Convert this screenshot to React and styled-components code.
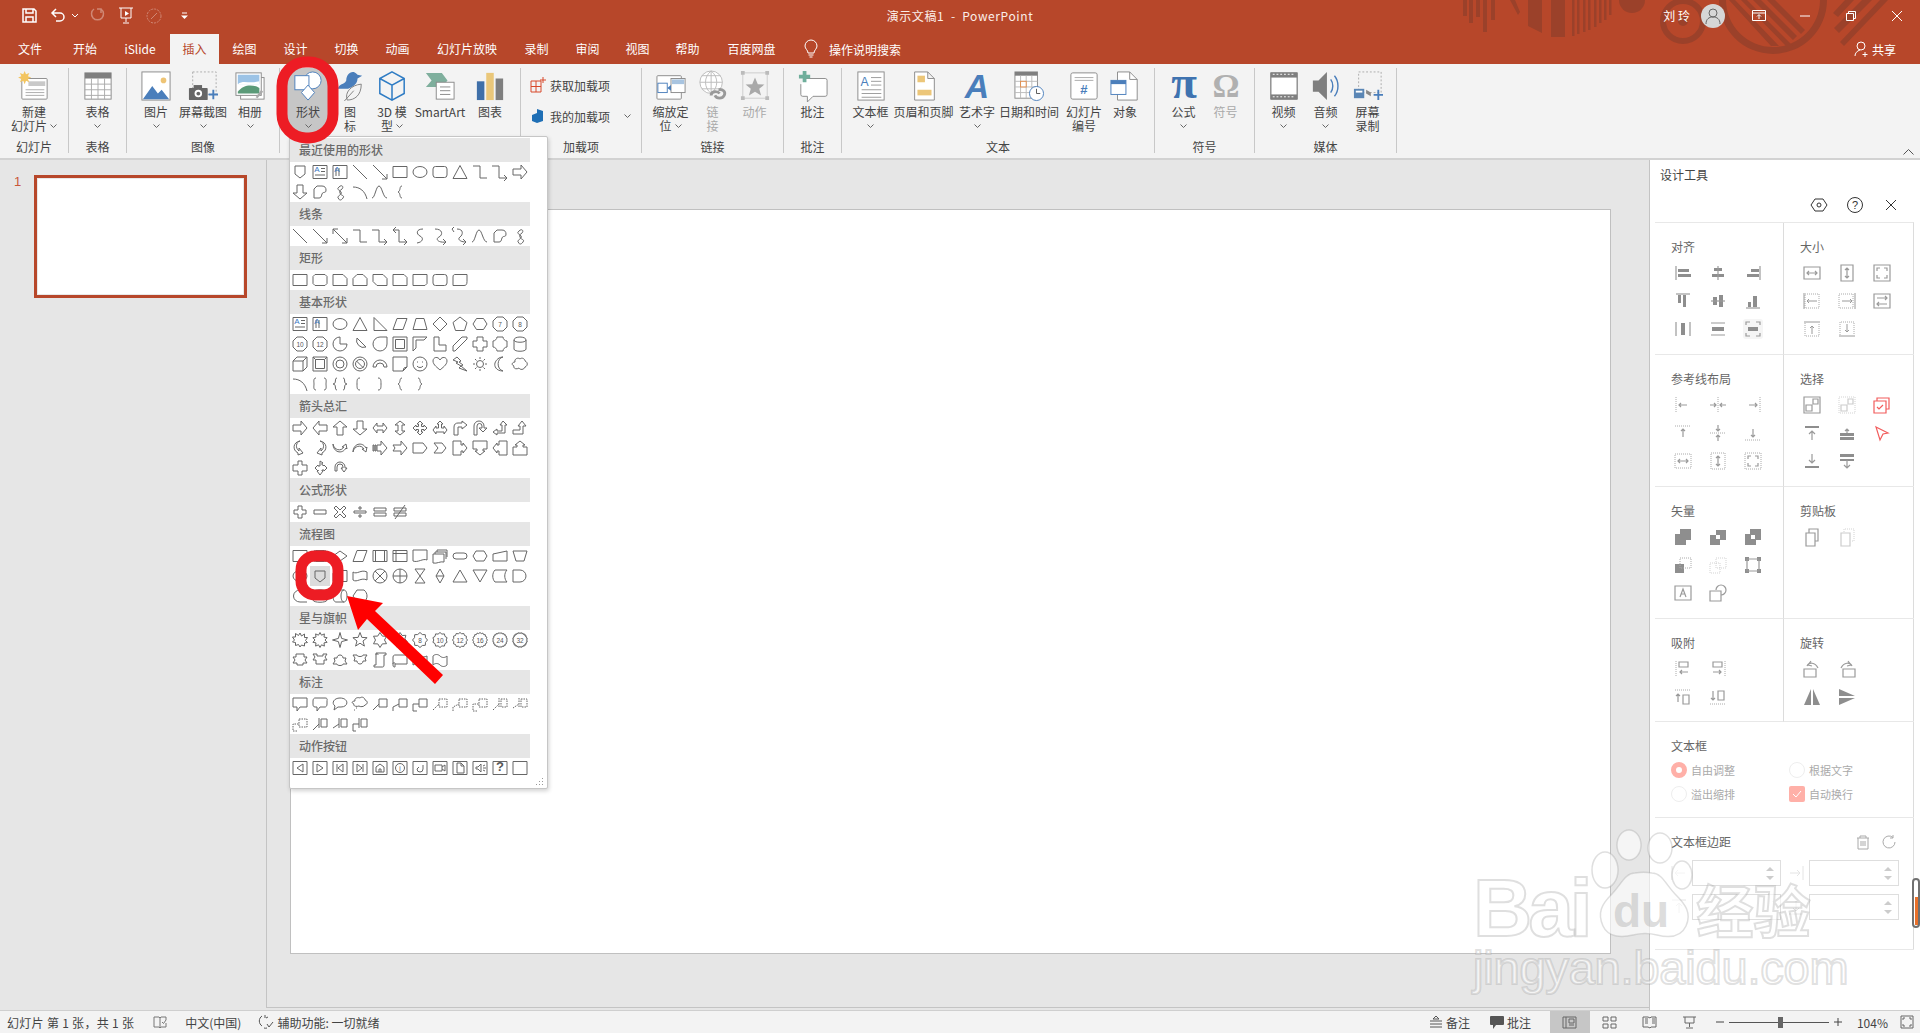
import React from 'react';
import styled, { createGlobalStyle } from 'styled-components';

const FONT = '"Noto Sans CJK SC", "Liberation Sans", sans-serif';

const GlobalStyle = createGlobalStyle`
    html, body { margin: 0; padding: 0; background: #e6e6e6; }
    body { font-family: ${FONT}; font-size: 12px; color: #444; }
    * { box-sizing: border-box; }
`;

const Page = styled.div`
    position: relative;
    width: 1920px;
    height: 1033px;
    overflow: hidden;
    display: flex;
    flex-direction: column;
`;

/* title bar */
const TitleBar = styled.div`
    position: relative;
    height: 64px;
    background: #b7472a;
    color: #fff;
    flex-shrink: 0;
`;
const Decor = styled.svg`
    position: absolute;
    left: 0;
    top: 0;
`;
const TopRow = styled.div`
    position: relative;
    height: 34px;
    padding-bottom: 3px;
    display: grid;
    grid-template-columns: 1fr auto 1fr;
    align-items: center;
`;
const Qat = styled.div`
    display: flex;
    align-items: center;
`;
const QatBtn = styled.span`
    display: flex;
    justify-content: center;
    align-items: center;
    width: ${(p) => p.$w}px;
    margin-left: ${(p) => p.$ml}px;
    opacity: ${(p) => (p.$dim ? 0.35 : 1)};
`;
const DocTitle = styled.div`
    font-size: 12px;
    letter-spacing: 0.6px;
    color: #fbeee9;
    white-space: pre;
`;
const WinControls = styled.div`
    display: flex;
    justify-content: flex-end;
    align-items: center;
`;
const UserName = styled.span`
    font-size: 12px;
    margin-right: 11px;
`;
const Avatar = styled.span`
    width: 24px;
    height: 24px;
    border-radius: 50%;
    background: #d6d6d6;
    display: flex;
    align-items: center;
    justify-content: center;
    margin-right: 11px;
`;
const WinBtn = styled.span`
    width: 46px;
    display: flex;
    justify-content: center;
`;
const TabRow = styled.div`
    position: relative;
    height: 30px;
    display: flex;
`;
const Tab = styled.div`
    width: ${(p) => p.$w}px;
    text-align: center;
    line-height: 30px;
    font-size: 12px;
    background: ${(p) => (p.$active ? '#f3f3f3' : 'transparent')};
    color: ${(p) => (p.$active ? '#b7472a' : '#fff')};
`;
const TellMe = styled.div`
    display: flex;
    align-items: center;
    margin-left: 14px;
    gap: 11px;
    font-size: 12px;
`;
const Share = styled.div`
    display: flex;
    align-items: center;
    gap: 3px;
    margin-left: auto;
    margin-right: 24px;
    font-size: 12px;
`;

/* ribbon */
const Ribbon = styled.div`
    height: 96px;
    padding-top: 4px;
    display: flex;
    align-items: flex-start;
    background: #f3f3f3;
    border-bottom: 2px solid #d2d2d2;
    flex-shrink: 0;
    position: relative;
`;
const Group = styled.div`
    width: ${(p) => p.$w}px;
    height: 85px;
    display: flex;
    flex-direction: column;
    border-right: 1px solid #c8c8c8;
`;
const GroupBody = styled.div`
    flex: 1;
    display: flex;
    justify-content: center;
    padding-right: ${(p) => p.$pr || 0}px;
`;
const GroupLabel = styled.div`
    height: 18px;
    line-height: 23px;
    text-align: center;
    font-size: 12px;
    color: #444;
`;
const RibbonBtn = styled.div`
    width: ${(p) => p.$w}px;
    height: 65px;
    padding-top: 3px;
    display: flex;
    flex-direction: column;
    align-items: center;
    background: ${(p) => (p.$on ? '#c6c6c6' : 'transparent')};
    color: ${(p) => (p.$off ? '#a9a9a9' : '#444')};
`;
const BtnLine = styled.div`
    height: 14px;
    line-height: 14px;
    font-size: 12px;
    white-space: nowrap;
    display: flex;
    align-items: center;
    gap: 3px;
    &:first-of-type { margin-top: 4px; }
`;
const AddInList = styled.div`
    width: 100%;
    padding: 9px 0 0 9px;
    display: flex;
    flex-direction: column;
    gap: 15px;
`;
const AddIn = styled.div`
    display: flex;
    align-items: center;
    gap: 4px;
    height: 16px;
    font-size: 12px;
    white-space: nowrap;
`;
const ChevGap = styled.span`
    width: 6px;
`;
const Collapse = styled.svg`
    position: absolute;
    right: 6px;
    bottom: 3px;
`;

/* work area */
const Body = styled.div`
    flex: 1;
    display: flex;
    min-height: 0;
    background: #e6e6e6;
`;
const ThumbPane = styled.div`
    width: 267px;
    margin-bottom: 2px;
    padding: 15px 0 0 14px;
    display: flex;
    gap: 14px;
    align-items: flex-start;
    border-right: 1px solid #c4c4c4;
`;
const ThumbNo = styled.span`
    width: 6px;
    margin-top: -1px;
    color: #c9563a;
    font-size: 13px;
    line-height: 16px;
    font-family: "Liberation Sans", sans-serif;
`;
const Thumb = styled.div`
    width: 213px;
    height: 123px;
    background: #fff;
    border: 3px solid #b7472a;
    box-shadow: inset 0 0 0 1px #e8e8e8;
`;
const Stage = styled.div`
    flex: 1;
    margin-bottom: 2px;
    padding: 49px 39px 0 23px;
    border-bottom: 1px solid #c4c4c4;
`;
const SlideCanvas = styled.div`
    width: 100%;
    height: 745px;
    background: #fff;
    border: 1px solid #c0c0c0;
`;

/* design panel */
const Panel = styled.div`
    width: 270px;
    background: #fff;
    padding: 0 6px 0 5px;
    position: relative;
    box-shadow: -1px 0 0 #c4c4c4;
`;
const PanelTitle = styled.div`
    padding: 7px 0 0 5px;
    height: 31px;
    font-size: 12px;
    line-height: 16px;
    color: #444;
`;
const PanelTools = styled.div`
    height: 28px;
    margin-bottom: 3px;
    display: flex;
    justify-content: flex-end;
    align-items: center;
    gap: 20px;
    padding-right: 15px;
`;
const PanelGrid = styled.div`
    display: grid;
    grid-template-columns: 129px 130px;
    border-top: 1px solid #e8e8e8;
    border-right: 1px solid #dcdcdc;
`;
const Section = styled.div`
    height: ${(p) => p.$h}px;
    grid-column: ${(p) => (p.$wide ? 'span 2' : 'auto')};
    padding: 16px 0 0 16px;
    border-bottom: 1px solid #e8e8e8;
    border-right: ${(p) => (p.$left ? '1px solid #dcdcdc' : 'none')};
`;
const SectionTitle = styled.div`
    display: flex;
    align-items: center;
    justify-content: space-between;
    padding-right: 17px;
    height: 16px;
    line-height: 16px;
    font-size: 12px;
    color: #666;
`;
const ToolGrid = styled.div`
    display: grid;
    grid-template-columns: repeat(3, 35px);
    grid-auto-rows: 28px;
    margin: 4px 0 0 -6px;
`;
const ToolCell = styled.div`
    display: flex;
    align-items: center;
    justify-content: center;
`;
const ToolBg = styled.span`
    display: flex;
    padding: 1px;
    border-radius: 3px;
    background: ${(p) => (p.$on ? '#f5f5f5' : 'transparent')};
`;
const Options = styled.div`
    display: grid;
    grid-template-columns: 118px 118px;
    grid-auto-rows: 24px;
    margin-top: 4px;
`;
const Option = styled.div`
    display: flex;
    align-items: center;
    gap: 4px;
    font-size: 11px;
    color: #aaa;
`;
const Radio = styled.span`
    width: 16px;
    height: 16px;
    border-radius: 50%;
    border: ${(p) => (p.$on ? '5px solid #ffb0a8' : '1px solid #eee')};
    background: #fff;
`;
const Check = styled.span`
    width: 16px;
    height: 16px;
    border-radius: 2px;
    background: #ffb0a8;
    display: flex;
    align-items: center;
    justify-content: center;
`;
const MarginRow = styled.div`
    display: flex;
    align-items: center;
    height: 26px;
    margin-top: ${(p) => p.$mt}px;
`;
const MarginIcon = styled.span`
    width: 21px;
    display: flex;
    opacity: 0.5;
`;
const SpinInput = styled.div`
    width: ${(p) => p.$w}px;
    height: 26px;
    border: 1px solid #dedede;
    display: flex;
    flex-direction: column;
    align-items: flex-end;
    justify-content: center;
    gap: 5px;
    padding-right: 6px;
    margin-right: 7px;
`;
const Spin = styled.i`
    width: 0;
    height: 0;
    border-left: 4px solid transparent;
    border-right: 4px solid transparent;
    border-bottom: ${(p) => (p.$down ? 'none' : '4px solid #ccc')};
    border-top: ${(p) => (p.$down ? '4px solid #ccc' : 'none')};
`;
const ScrollThumb = styled.div`
    position: absolute;
    right: 0;
    top: 718px;
    width: 8px;
    height: 50px;
    border: 2px solid #707070;
    border-radius: 4px;
    background: #fff;
    display: flex;
    align-items: flex-end;
    justify-content: center;
    padding-bottom: 1px;
    &::after {
        content: '';
        width: 3px;
        height: 28px;
        background: #e8702a;
    }
`;

/* status bar */
const StatusBar = styled.div`
    height: 23px;
    background: #f3f3f3;
    border-top: 1px solid #cfcfcf;
    display: flex;
    align-items: center;
    font-size: 12px;
    color: #444;
    flex-shrink: 0;
    padding-left: 7px;
`;
const StatusItem = styled.span`
    display: flex;
    align-items: center;
    gap: ${(p) => p.$gap ?? 3}px;
    margin-left: ${(p) => p.$ml || 0}px;
    white-space: nowrap;
    letter-spacing: ${(p) => p.$ls || 0}px;
    height: ${(p) => (p.$full ? '100%' : 'auto')};
`;
const StatusRight = styled.div`
    margin-left: auto;
    padding-right: 6px;
    display: flex;
    align-items: center;
    height: 100%;
`;
const ViewBtn = styled.span`
    width: 40px;
    height: 100%;
    display: flex;
    align-items: center;
    justify-content: center;
    background: ${(p) => (p.$on ? '#c6c6c6' : 'transparent')};
`;
const ZoomTrack = styled.div`
    position: relative;
    width: 100px;
    height: 1px;
    margin: 0 4px;
    background: #555;
`;
const ZoomKnob = styled.i`
    position: absolute;
    left: 49px;
    top: -5px;
    width: 5px;
    height: 11px;
    background: #666;
`;

/* shapes gallery */
const Gallery = styled.div`
    position: absolute;
    left: 289px;
    top: 136px;
    width: 259px;
    height: 653px;
    padding: 1px 0 0 1px;
    background: #fff;
    border: 1px solid #c6c6c6;
    border-radius: 2px;
    box-shadow: 1px 2px 4px rgba(0, 0, 0, 0.18);
`;
const GalleryHead = styled.div`
    width: 240px;
    height: 24px;
    margin-left: -1px;
    padding-left: 9px;
    line-height: 24px;
    background: #e6e6e6;
    color: #6a6a6a;
    font-size: 12px;
    font-weight: 500;
`;
const GalleryGrid = styled.div`
    width: 240px;
    margin-left: -1px;
    display: grid;
    grid-template-columns: repeat(12, 20px);
    grid-auto-rows: 20px;
`;
const ShapeCell = styled.div`
    display: flex;
    align-items: center;
    justify-content: center;
    background: ${(p) => (p.$on ? '#dcdcdc' : 'transparent')};
`;
const Grip = styled.svg`
    position: absolute;
    right: 3px;
    bottom: 3px;
`;

/* overlays */
const Overlay = styled.svg`
    position: absolute;
    left: 0;
    top: 0;
    pointer-events: none;
`;
const Watermark = styled.div`
    position: absolute;
    left: 1473px;
    top: 836px;
    pointer-events: none;
`;
const MarkRow = styled.div`
    display: flex;
    align-items: flex-end;
`;
const MarkText = styled.span`
    font-family: ${(p) => (p.$cjk ? FONT : '"Liberation Sans", sans-serif')};
    font-size: ${(p) => p.$size}px;
    font-weight: ${(p) => p.$weight || 400};
    line-height: ${(p) => p.$lh}px;
    letter-spacing: ${(p) => p.$ls || 0}px;
    margin-left: ${(p) => p.$ml || 0}px;
    color: rgba(255, 255, 255, 0.6);
    -webkit-text-stroke: 2px rgba(150, 150, 150, 0.3);
    white-space: nowrap;
    display: block;
`;

const star = (n, R = 7.5, r = 5) => {
    const pts = [];
    for (let i = 0; i < n * 2; i++) {
        const a = (Math.PI * i) / n - Math.PI / 2;
        const v = i % 2 ? r : R;
        pts.push(`${(8 + v * Math.cos(a)).toFixed(1)} ${(8 + v * Math.sin(a)).toFixed(1)}`);
    }
    return `M${pts.join('L')}z`;
};

const circle = (cx, cy, r) => `M${cx - r} ${cy}a${r} ${r} 0 1 0 ${r * 2} 0a${r} ${r} 0 1 0 ${-r * 2} 0z`;

const P = {
    line: 'M1 1l14 14',
    arrow: 'M1 1l14 14M15 10v5h-5',
    dbl: 'M1 1l14 14M15 10v5h-5M1 6V1h5',
    elbow: 'M1 2h7v12h7',
    elbowA: 'M0 2h7v12h8M12 11l3 3-3 3',
    elbowD: 'M1 2h6v12h8M12 11l3 3-3 3M4 -1L1 2l3 3',
    curve: 'M11 1C4 1 4 6 8 8s3 6-3 7',
    curveA: 'M3 1c8 0 8 6 4 8s-1 6 7 5M11 11l3 3-3 3',
    curveD: 'M5 1c7 0 6 6 3 8s0 5 6 5M2 -1L0 1l2 3M11 11l3 3-3 3',
    wave: 'M0 14C3 14 4 2 7 2s4 12 8 12',
    free: 'M2 14V5l3-3h5c3 0 4 2 4 4 0 4-3 1-4 4s-1 4-3 4z',
    scrib: 'M7 15c-4-3 4-4 2-7S4 6 7 3s5 0 3 2-3 1-2 4 5 2 3 5-4 2-4 1',
    rect: 'M1 2.5h14v11H1z',
    ell: 'M1 8a7 5.5 0 1 0 14 0a7 5.5 0 1 0 -14 0z',
    rr: 'M3.5 2.5h9a2.5 2.5 0 0 1 2.5 2.5v6a2.5 2.5 0 0 1-2.5 2.5h-9A2.5 2.5 0 0 1 1 11V5a2.5 2.5 0 0 1 2.5-2.5z',
    tri: 'M8 1.5l7 13H1z',
    rtri: 'M2 1.5l13 13H2z',
    para: 'M5 2.5h10l-4 11H1z',
    trap: 'M4 2.5h8l3 11H1z',
    dia: 'M8 1l7 7-7 7-7-7z',
    pent: 'M8 1l7 5.5-2.5 8h-9L1 6.5z',
    hex: 'M4.5 2.5h7L15 8l-3.5 5.5h-7L1 8z',
    oct: 'M5 1h6l4 4v6l-4 4H5l-4-4V5z',
    shield: 'M3 2h10v8l-5 4-5-4z',
    tb: 'M1 1.5h14v13H1zM9 4.5h4M9 7.5h4M3 11h10',
    vtb: 'M1 1.5h14v13H1zM4 4v8M7 4v8',
    right: 'M1 5h8V1l6 7-6 7v-4H1z',
    left: 'M15 5H7V1L1 8l6 7v-4h8z',
    up: 'M5 15V7H1l7-6 7 6h-4v8z',
    down: 'M5 1v8H1l7 6 7-6h-4V1z',
    lr: 'M1 8l4-5v3h6V3l4 5-4 5v-3H5v3z',
    ud: 'M8 1l5 4h-3v6h3l-5 4-5-4h3V5H3z',
    quad: 'M8 1l3 3H9.5v2.5H12V5l3 3-3 3V9.5H9.5V12H11l-3 3-3-3h1.5V9.5H4V11L1 8l3-3v1.5h2.5V4H5z',
    lru: 'M8 1l3 3H9.5v4H12V6l3 4-3 4v-2H4v2l-3-4 3-4v2h2.5V4H5z',
    bent: 'M2 15V7c0-3 2-4 4-4h4V1l5 4-5 4V7H6v8z',
    uturn: 'M2 15V6a5 5 0 0 1 10 0v2h3l-4 4-4-4h3V6a2 2 0 0 0-5 0v9z',
    leftup: 'M11 1l4 4h-2v8H5v2l-4-3 4-3v2h5V5H8z',
    bentup: 'M10 1l4 5h-3v8H1v-4h7V6H6z',
    cr: 'M8 1C4 2 3 8 7 11V8l4 5-5 2v-2C0 10 1 2 8 1z',
    cl: 'M8 1c4 1 5 7 1 10V8l-4 5 5 2v-2c6-3 5-11-2-12z',
    cu: 'M1 4c1 6 8 8 11 3h-2l4-3 1 5-1-1c-4 7-13 4-13-4z',
    cd: 'M1 12c1-6 8-8 11-3h-2l4 3 1-5-1 1C10 1 1 4 1 12z',
    striped: 'M1 5h1v6H1zM3 5h1v6H3zM5 5h4V1l6 7-6 7v-4H5z',
    notch: 'M1 5h8V1l6 7-6 7v-4H1l2-3z',
    home: 'M1 3h10l4 5-4 5H1z',
    chev: 'M2 3h8l4 5-4 5H2l4-5z',
    cbr: 'M1 1h8v4h2V3l4 5-4 5v-2H9v4H1z',
    cbd: 'M1 1h14v8h-4v2h2l-5 4-5-4h2V9H1z',
    cbl: 'M15 1H7v4H5V3L1 8l4 5v-2h2v4h8z',
    cbu: 'M1 15h14V7h-4V5h2L8 1 3 5h2v2H1z',
    clr: 'M6 1h4v4h5v6h-5v4H6v-4H1V5h5z',
    cq: 'M8 1l3 2h-1v2h1l1 1V5l3 3-3 3v-1h-2v1h1l-3 4-3-4h1V10H6v1L3 8l3-3v1h2V3z',
    circ: 'M3 11V7a5 5 0 0 1 10 0v1h2l-3 4-3-4h2V7a3 3 0 0 0-6 0v4z',
    plus: 'M6 2h4v4h4v4h-4v4H6v-4H2V6h4z',
    minus: 'M2 6h12v4H2z',
    mult: 'M4 2l4 4 4-4 2 2-4 4 4 4-2 2-4-4-4 4-2-2 4-4-4-4z',
    div: 'M2 7h12v2H2zM7 3h2v2H7zM7 11h2v2H7z',
    eq: 'M2 4h12v3H2zM2 9h12v3H2z',
    neq: 'M2 4h12v3H2zM2 9h12v3H2zM3 15L13 1',
    proc: 'M1 2.5h14v11H1z',
    dec: 'M8 3l7 5-7 5-7-5z',
    predef: 'M1 2.5h14v11H1zM3.5 2.5v11M12.5 2.5v11',
    intern: 'M1 2.5h14v11H1zM4 2.5v11M1 5.5h14',
    doc: 'M1 2h14v10c-4-2-9 3-14 1z',
    multi: 'M1 6h11v8c-4-1-7 2-11 1zM3 6V4h11v7M5 4V2h10v7',
    term: 'M4 5h8a3 3 0 0 1 0 6H4a3 3 0 0 1 0-6z',
    prep: 'M4 3h8l3 5-3 5H4L1 8z',
    manual: 'M1 6l14-3v10H1z',
    manop: 'M1 3h14l-3 10H4z',
    card: 'M4 2.5h11v11H1V5.5z',
    tape: 'M1 4c4 3 8-3 14 0v8c-6-3-10 3-14 0z',
    sum: `${circle(8, 8, 7)}M3 3l10 10M13 3L3 13`,
    or: `${circle(8, 8, 7)}M1 8h14M8 1v14`,
    coll: 'M3 1h10L3 15h10z',
    sort: 'M8 1l4 7-4 7-4-7zM4 8h8',
    ext: 'M8 2l7 12H1z',
    merge: 'M1 2h14L8 14z',
    stored: 'M3 2h12c-3 3-3 9 0 12H3c-3-3-3-9 0-12z',
    delay: 'M1 2h7a6 6 0 0 1 0 12H1z',
    seq: 'M8 2a6.5 6 0 1 0 0 12h7',
    disk: 'M1 4c0-3 14-3 14 0v8c0 3-14 3-14 0zM1 4c0 3 14 3 14 0',
    direct: 'M4 2h8c2 0 3 3 3 6s-1 6-3 6H4c-2 0-3-3-3-6s1-6 3-6zM12 2c-2 0-3 3-3 6s1 6 3 6',
    disp: 'M5 2h7c4 3 4 9 0 12H5L1 8z',
    ribU: 'M1 5h3V2h8v3h3l-2 3 2 3h-4v2H5v-2H1l2-3z',
    ribD: 'M1 2h4v2h6V2h4l-2 3 2 3h-3v4H4V8H1l2-3z',
    cribU: 'M1 12l2-3-1-3h3c0-4 6-4 6 0h3l-1 3 2 3h-4c0 2-6 2-6 0z',
    cribD: 'M1 3h4c0 2 6 2 6 0h4l-2 3 1 3h-3c0 4-6 4-6 0H2l1-3z',
    vscroll: 'M4 1h10v2h-2v10c0 2-1 2-2 2H2v-2h2zM4 3c0-2 2-2 2 0',
    hscroll: 'M1 5c0-2 2-2 2-2h12v9H3v3c-1 0-2 0-2-2zM3 12c0-2-2-2-2 0',
    waveF: 'M1 4c4-3 9 3 14 0v9c-5 3-10-3-14 0z',
    wave2: 'M1 4c2-2 5-2 7 0s5 2 7 0v9c-2 2-5 2-7 0s-5-2-7 0z',
    callR: 'M1 2h14v9H8l-3 4v-4H1z',
    callRR: 'M3 2h10c3 0 2 2 2 3v3c0 2-1 3-2 3H8l-3 4v-4H3c-2 0-2-2-2-3V5c0-2 1-3 2-3z',
    callO: 'M8 2c9 0 9 9 1 9-1 0-2 0-3 0l-4 3 1-4C-1 7 2 2 8 2z',
    cloud: 'M3 6c-1-3 3-5 5-3 2-2 5 0 5 2 3 1 3 5 0 6-1 3-5 3-6 1-3 2-6 0-5-2-3-1-2-4 1-4z',
    cloudC: 'M3 5c-1-3 3-4 5-3 2-2 5 0 5 2 3 1 3 4 0 5-1 2-5 2-6 1-3 1-6 0-5-2-3-1-2-3 1-3zM2 14h1M4 12h1',
    l1: 'M7 3h8v8H7zM1 14l6-6',
    l2: 'M7 3h8v8H7zM1 15v-4l6-3',
    l3: 'M7 3h8v8H7zM5 15H1V8h6',
    a1: 'M9 3h6v8H9zM7 2v10M1 14l6-6',
    a2: 'M9 3h6v8H9zM7 2v10M1 12l6-4',
    a3: 'M9 3h6v8H9zM7 2v10M4 15H1V8h6',
    btn: 'M1 1.5h14v13H1z',
};

const T = (d, t) => ({ d, t });
const D = (d) => ({ d, dash: true });
const HI = 'HI';

const SECTIONS = [
    ['最近使用的形状', [P.shield, T(P.tb, 'A'), T(P.vtb, 'A'), P.line, P.arrow, P.rect, P.ell, P.rr, P.tri, P.elbow, P.elbowA, P.right, P.down, P.free, P.scrib, 'M1 3c7 0 12 4 14 12', P.wave, 'M10 2C7 2 9 7 6 8c3 1 1 6 4 6']],
    ['线条', [P.line, P.arrow, P.dbl, P.elbow, P.elbowA, P.elbowD, P.curve, P.curveA, P.curveD, P.wave, P.free, P.scrib]],
    ['矩形', [P.rect, 'M3 2.5h10l2 2v7l-2 2H3l-2-2v-7z', 'M1 2.5h10l4 4v7H1z', 'M5 2.5h6l4 4v7H1v-7z', 'M1 2.5h10l4 4v7H5l-4-4z', 'M1 2.5h11l3 3v8H1z', 'M1 2.5h14v9l-2 2H1z', P.rr, 'M3 2.5h12v7c0 3-1 4-3 4H1V5c0-2 1-2.5 2-2.5z']],
    ['基本形状', [T(P.tb, 'A'), T(P.vtb, 'A'), P.ell, P.tri, P.rtri, P.para, P.trap, P.dia, P.pent, P.hex, T(P.oct, '7'), T(P.oct, '8'),
        T(P.oct, '10'), T(P.oct, '12'), 'M8 1a7 7 0 1 0 7 7H8z', 'M5 2L14 11A7 7 0 0 1 5 2z', 'M15 1v7a7 7 0 1 1-7-7z', 'M1 1h14v14H1zM3.5 3.5h9v9h-9z', 'M1 1h14l-3 3H4v8l-3 3z', 'M2 1h5v8h7v6H2z', 'M1 15V10L10 1h5v2L3 15z', 'M5 1h6v4h4v6h-4v4H5v-4H1V5h4z', 'M5 1h6c0 2 2 4 4 4v6c-2 0-4 2-4 4H5c0-2-2-4-4-4V5c2 0 4-2 4-4z', 'M2 4c0-4 12-4 12 0v9c0 3-12 3-12 0zM2 4c0 3 12 3 12 0',
        'M1 5l4-4h10v10l-4 4H1zM1 5h10v10M11 5l4-4', 'M1 1h14v14H1zM3.5 3.5h9v9h-9zM1 1l2.5 2.5M15 1l-2.5 2.5', `${circle(8, 8, 7)}${circle(8, 8, 4)}`, `${circle(8, 8, 7)}${circle(8, 8, 4.5)}M4.5 5l7 7`, 'M1 11a7 7 0 0 1 14 0h-3a4 4 0 0 0-8 0z', 'M1 1h14v10l-4 4H1zM11 15l1-3 3-1', `${circle(8, 8, 7)}M5 6h1M10 6h1M5 10c1 2 5 2 6 0`, 'M8 4c2-4 7-3 7 1 0 4-5 7-7 9-2-2-7-5-7-9 0-4 5-5 7-1z', 'M5 1l4 4-2 1 4 3-2 1 6 5-8-3 2-2-5-3 2-1L1 4z', `${circle(8, 8, 3.5)}M8 1v2M8 13v2M1 8h2M13 8h2M3 3l1.5 1.5M13 13l-1.5-1.5M13 3l-1.5 1.5M3 13l1.5-1.5`, 'M11 1C5 2 4 13 11 15 4 15 2 10 3 7s4-6 8-6z', P.cloud,
        'M1 3c7 0 12 4 14 12', 'M4 2C1 2 2 6 2 8s-1 6 2 6M12 2c3 0 2 4 2 6s1 6-2 6', 'M5 2C2 2 5 8 1 8c4 0 1 6 4 6M11 2c3 0 0 6 4 6-4 0-1 6-4 6', 'M8 2C5 2 5 4 5 8s0 6 3 6', 'M6 2c3 0 3 2 3 6s0 6-3 6', 'M10 2C7 2 9 7 6 8c3 1 1 6 4 6', 'M6 2c3 0 1 5 4 6-3 1-1 6-4 6']],
    ['箭头总汇', [P.right, P.left, P.up, P.down, P.lr, P.ud, P.quad, P.lru, P.bent, P.uturn, P.leftup, P.bentup,
        P.cr, P.cl, P.cu, P.cd, P.striped, P.notch, P.home, P.chev, P.cbr, P.cbd, P.cbl, P.cbu, P.clr, P.cq, P.circ]],
    ['公式形状', [P.plus, P.minus, P.mult, P.div, P.eq, P.neq]],
    ['流程图', [P.proc, P.rr, P.dec, P.para, P.predef, P.intern, P.doc, P.multi, P.term, P.prep, P.manual, P.manop,
        P.ell, HI, P.card, P.tape, P.sum, P.or, P.coll, P.sort, P.ext, P.merge, P.stored, P.delay, P.seq, P.disk, P.direct, P.disp]],
    ['星与旗帜', ['M8 1l1.5 3 3-2 0 3.5 3 0-2 3 2 2-3 .5 0 3-3-1L8 15l-1.5-2.5-3 1 0-3-3-.5 2-2-2-3 3 0 0-3.5 3 2z', star(10, 7.5, 5), star(4, 7.5, 2.2), star(5, 7.5, 3.2), star(6, 7.5, 4.5), star(7, 7.5, 5), T(star(8, 7.5, 6), '8'), T(star(10, 7.5, 6.2), '10'), T(star(12, 7.5, 6.4), '12'), T(star(16, 7.5, 6.5), '16'), T(star(24, 7.5, 6.5), '24'), T(star(32, 7.5, 6.5), '32'),
        P.ribU, P.ribD, P.cribU, P.cribD, P.vscroll, P.hscroll, P.waveF, P.wave2]],
    ['标注', [P.callR, P.callRR, P.callO, P.cloudC, P.l1, P.l2, P.l3, D(P.l1), D(P.l2), D(P.l3), D(P.a1), D(P.a2),
        D(P.l3), P.a1, P.a2, P.a3]],
    ['动作按钮', [`${P.btn}M11 4v8L5 8z`, `${P.btn}M5 4v8l6-4z`, `${P.btn}M11 4v8L6 8zM5 4v8`, `${P.btn}M5 4v8l5-4zM11 4v8`, `${P.btn}M4 12V7l4-3 4 3v5zM7 12V9h2v3`, T(`${P.btn}${circle(8, 8, 4.5)}`, 'i'), `${P.btn}M11 5v4a3 3 0 0 1-6 0l2-2`, `${P.btn}M3 5h7v6H3zM10 7l3-2v6l-3-2`, `${P.btn}M5 3h4l3 3v7H5zM9 3v3h3`, `${P.btn}M4 7v2h2l3 3V4L6 7zM11 6l2-1M11 8h3M11 10l2 1`, T(P.btn, '?'), P.btn]],
];

const IconSvg = styled.svg`
    display: block;
    flex-shrink: 0;
    overflow: visible;
`;

const ShapeIcon = ({ d, t, dash }) => (
    <IconSvg width="16" height="16" viewBox="0 0 16 16">
        <path d={d} fill="none" stroke="#666" strokeWidth="1" strokeDasharray={dash ? '1.5 1' : undefined} />
        {t && (
            <text x={t === 'A' ? 5 : 8} y={t === 'A' ? 8 : 11} textAnchor="middle" fontSize={t === 'A' ? 8 : t === '?' ? 13 : 6.5} fontWeight={t === '?' ? 700 : 400} fontFamily="Liberation Sans" fill={t === 'A' ? '#3b78c2' : '#555'}>{t}</text>
        )}
    </IconSvg>
);

const ShapeGallery = () => (
    <Gallery>
        {SECTIONS.map(([title, items]) => (
            <React.Fragment key={title}>
                <GalleryHead>{title}</GalleryHead>
                <GalleryGrid>
                    {items.map((item, i) => {
                        if (item === HI) return <ShapeCell key={i} $on><ShapeIcon d="M3 3h10v7l-5 4-5-4z" /></ShapeCell>;
                        const p = typeof item === 'string' ? { d: item } : item;
                        return <ShapeCell key={i}><ShapeIcon {...p} /></ShapeCell>;
                    })}
                </GalleryGrid>
            </React.Fragment>
        ))}
        <Grip width="8" height="8" viewBox="0 0 8 8">
            <path d="M6 1h1v1H6zM3 4h1v1H3zM6 4h1v1H6zM0 7h1v1H0zM3 7h1v1H3zM6 7h1v1H6z" fill="#999" />
        </Grip>
    </Gallery>
);

/* ribbon pictures, all 32 x 32 */
const BLUE = '#4a7ebb';
const GREY = '#7f7f7f';
const LINE = '#8a8a8a';
const R = ({ children }) => <IconSvg width="30" height="30" viewBox="0 0 32 32">{children}</IconSvg>;

const ICONS = {
    newSlide: <R><rect x="3" y="8" width="27" height="22" rx="1" fill="#fff" stroke={LINE} /><rect x="10" y="11" width="18" height="5" fill="#c9c9c9" /><path d="M7 20h20M7 23h20M7 26h20" stroke="#aaa" /><path d="M6 0l1.5 3.5L11 2 9.5 5.5 13 7 9.5 8.5 11 12 7.500 10.500 6 14 4.500 10.500 1 12 2.500 8.500-1 7l3.500-1.500L1 2l3.500 1.500z" fill="#f3c560" /></R>,
    table: <R><rect x="2" y="2" width="28" height="28" fill="#fff" stroke={LINE} /><rect x="2" y="2" width="28" height="6" fill={GREY} /><path d="M2 14h28M2 20h28M2 26h28M9 8v22M16 8v22M23 8v22" stroke="#aaa" fill="none" /></R>,
    picture: <R><rect x="1" y="1" width="30" height="30" fill="#fff" stroke={LINE} /><path d="M2 30l10-14 6 8 4-4 8 10z" fill={BLUE} /><circle cx="24" cy="10" r="3" fill="#eec475" /></R>,
    shot: <R><rect x="5" y="1" width="25" height="24" fill="none" stroke="#aaa" strokeDasharray="2 2" /><rect x="1" y="18" width="20" height="13" rx="1" fill="#666" /><rect x="6" y="15" width="9" height="4" fill="#666" /><circle cx="11" cy="24" r="4" fill="#fff" /><circle cx="11" cy="24" r="2" fill="#666" /><path d="M27 20v10M22 25h10" stroke={BLUE} strokeWidth="2" /></R>,
    album: <R><rect x="6" y="7" width="25" height="23" fill="#fff" stroke={LINE} /><rect x="1" y="2" width="27" height="24" fill="#fff" stroke={LINE} /><rect x="3" y="4" width="23" height="10" fill="#9cc3e6" /><path d="M3 14c6-5 12 0 23-3v3z" fill="#fff" /><path d="M3 22c6-8 16-8 23-4v6H3z" fill="#5b9a78" /><path d="M22 28l6-8 2 2-6 7z" fill="#aaa" /></R>,
    shapes: <R><circle cx="21" cy="10" r="9" fill="#fff" stroke={BLUE} /><rect x="2" y="5" width="15" height="15" fill="#fff" stroke={BLUE} /><path d="M16 15l7 8-7 8-7-8z" fill="#fff" stroke={BLUE} /></R>,
    icon: <R><path d="M3 19c1-6 7-4 9-9 0-5 3-9 7-9 3 0 5 3 5 3l5 1-5 3c0 6-5 9-10 11z" fill={BLUE} /><path d="M13 31c-3-8 4-16 15-17 0 12-7 17-15 17zM10 32l10-11" fill="#f3f3f3" stroke={GREY} /></R>,
    cube: <R><path d="M16 1l13 7v16l-13 7-13-7V8zM3 8l13 7 13-7M16 15v16" fill="none" stroke="#2f7cc4" strokeWidth="1.6" /></R>,
    smart: <R><path d="M1 2h17l6 8-6 7H1l6-7z" fill="#7faf9d" /><rect x="12" y="12" width="19" height="18" fill="#fff" stroke={LINE} /><path d="M16 17h11M16 21h11M16 25h11" stroke="#888" /></R>,
    chart: <R><rect x="2" y="11" width="8" height="20" fill="#3f6fa8" /><rect x="12" y="2" width="8" height="29" fill="#eac77a" /><rect x="22" y="8" width="8" height="23" fill={GREY} /></R>,
    zoom: <R><rect x="1" y="5" width="26" height="25" rx="1" fill="#fff" stroke={LINE} /><rect x="2" y="13" width="10" height="10" fill="#fff" stroke={BLUE} /><rect x="16" y="8" width="15" height="15" fill="#fff" stroke={LINE} /><rect x="17" y="9" width="13" height="5" fill="#a8c4e0" /><path d="M12 18l4-3v6z" fill={BLUE} /></R>,
    link: <R><circle cx="14" cy="12" r="12" fill="#fff" stroke="#bbb" /><path d="M14 0v24M2 12h24M4 5h20M4 19h20M14 0c-8 6-8 18 0 24M14 0c8 6 8 18 0 24" stroke="#bbb" fill="none" /><path d="M14 26c0-5 7-5 9-2M18 26c2 4 8 4 10 0s-2-7-6-6" stroke="#999" strokeWidth="3" fill="none" /></R>,
    action: <R><rect x="3" y="2" width="26" height="27" fill="none" stroke="#ccc" /><path d="M1 0h4v4H1zM27 0h4v4h-4zM1 27h4v4H1zM27 27h4v4h-4z" fill="#bbb" /><path d="M16 7l3 7 7 .5-5.500 4.500 2 7-6.500-4-6.500 4 2-7L6 14.500l7-.5z" fill="#a9a9a9" /></R>,
    comment: <R><path d="M7 8h22a2 2 0 0 1 2 2v15a2 2 0 0 1-2 2H16l-6 6v-6H5a2 2 0 0 1-2-2V14" fill="#fff" stroke={LINE} /><path d="M7 0v12M1 6h12" stroke="#6fae9b" strokeWidth="4" /></R>,
    textbox: <R><rect x="2" y="1" width="28" height="30" fill="#fff" stroke={LINE} /><text x="9" y="16" textAnchor="middle" fontSize="13" fontFamily="Liberation Sans" fill={BLUE}>A</text><path d="M16 7h11M16 11h11M16 15h11M6 20h21M6 24h21M6 28h21" stroke="#999" /></R>,
    header: <R><path d="M6 1h14l7 7v23H6zM20 1v7h7" fill="#fff" stroke={LINE} /><rect x="9" y="5" width="8" height="7" fill="#ecc679" /><rect x="9" y="20" width="15" height="6" fill="#ecc679" /></R>,
    art: <R><text x="16" y="29" textAnchor="middle" fontSize="36" fontStyle="italic" fontWeight="700" fontFamily="Liberation Sans" fill={BLUE}>A</text></R>,
    date: <R><rect x="1" y="1" width="24" height="28" fill="#fff" stroke={LINE} /><rect x="1" y="1" width="24" height="4" fill={GREY} /><path d="M1 11h24M1 17h24M1 23h24M7 5v24M13 5v24M19 5v24" stroke="#bbb" /><rect x="7" y="11" width="6" height="6" fill="#fff" stroke="#e08b4a" /><circle cx="24" cy="24" r="7.500" fill="#fff" stroke={BLUE} /><path d="M24 19v5h4" stroke="#555" fill="none" /></R>,
    slideNo: <R><rect x="2" y="2" width="28" height="28" rx="2" fill="#fff" stroke={LINE} /><path d="M6 7h20M6 10h20" stroke="#aaa" /><text x="16" y="25" textAnchor="middle" fontSize="14" fontWeight="700" fontFamily="Liberation Sans" fill={BLUE}>#</text></R>,
    object: <R><path d="M8 1h13l8 8v22H8z" fill="#fff" stroke={LINE} /><path d="M21 1v8h8" fill="none" stroke={LINE} /><rect x="1" y="10" width="16" height="15" fill="#fff" stroke={BLUE} /><rect x="1" y="10" width="16" height="4" fill={BLUE} /></R>,
    pi: <R><text x="16" y="29" textAnchor="middle" fontSize="50" fontWeight="700" fontFamily="Liberation Serif" fill="#3f73b0">π</text></R>,
    omega: <R><text x="16" y="28" textAnchor="middle" fontSize="36" fontFamily="Liberation Serif" fontWeight="700" fill="#b0b0b0">Ω</text></R>,
    video: <R><rect x="2" y="2" width="28" height="28" fill="#fff" stroke="#555" /><rect x="2" y="2" width="28" height="5" fill={GREY} /><rect x="2" y="25" width="28" height="5" fill={GREY} /><path d="M4 3.500h24M4 27.500h24" stroke="#fff" strokeDasharray="2 2" /></R>,
    audio: <R><path d="M2 10h6l9-9v30l-9-9H2z" fill={GREY} /><path d="M21 9c3 4 3 10 0 14M25 5c5 6 5 16 0 22" fill="none" stroke={BLUE} strokeWidth="1.500" /></R>,
    record: <R><rect x="6" y="1" width="24" height="22" fill="none" stroke="#aaa" strokeDasharray="2 2" /><rect x="1" y="19" width="11" height="10" fill="#5a86b5" /><rect x="3" y="21" width="7" height="2" fill="#fff" /><path d="M14 20l5 3v4l-5-3z" fill="#888" /><path d="M27 20v11M22 25.500h10" stroke={BLUE} strokeWidth="2" /></R>,
};

const Chevron = () => (
    <IconSvg width="7" height="4" viewBox="0 0 7 4"><path d="M.5.5l3 3 3-3" fill="none" stroke="#666" /></IconSvg>
);

const Btn = ({ w, icon, lines, on, off }) => (
    <RibbonBtn $w={w} $on={on} $off={off}>
        {ICONS[icon]}
        {lines.map((l, i) => (
            <BtnLine key={i}>
                {l === 'v' ? <Chevron /> : l.endsWith(' v') ? <>{l.slice(0, -2)}<Chevron /></> : l}
            </BtnLine>
        ))}
    </RibbonBtn>
);

const RibbonGroup = ({ w, label, pr, children }) => (
    <Group $w={w}>
        <GroupBody $pr={pr}>{children}</GroupBody>
        <GroupLabel>{label}</GroupLabel>
    </Group>
);

const RibbonBar = () => (
    <Ribbon>
        <RibbonGroup w={69} label="幻灯片"><Btn w={62} icon="newSlide" lines={['新建', '幻灯片 v']} /></RibbonGroup>
        <RibbonGroup w={58} label="表格"><Btn w={57} icon="table" lines={['表格', 'v']} /></RibbonGroup>
        <RibbonGroup w={153} label="图像">
            <Btn w={47} icon="picture" lines={['图片', 'v']} />
            <Btn w={47} icon="shot" lines={['屏幕截图', 'v']} />
            <Btn w={47} icon="album" lines={['相册', 'v']} />
        </RibbonGroup>
        <RibbonGroup w={241} label="">
            <Btn w={42} icon="shapes" lines={['形状', 'v']} on />
            <Btn w={42} icon="icon" lines={['图', '标']} />
            <Btn w={42} icon="cube" lines={['3D 模', '型 v']} />
            <Btn w={54} icon="smart" lines={['SmartArt']} />
            <Btn w={46} icon="chart" lines={['图表']} />
        </RibbonGroup>
        <Group $w={121}>
            <GroupBody>
                <AddInList>
                    <AddIn>
                        <IconSvg width="16" height="16" viewBox="0 0 16 16"><path d="M1 4h10v11H1zM1 9.500h10M6 4v11M13 0v6M10 3h6" fill="none" stroke="#d8482a" /></IconSvg>
                        获取加载项
                    </AddIn>
                    <AddIn>
                        <IconSvg width="16" height="16" viewBox="0 0 16 16"><path d="M7 1l6 2v10l-6 2-5-2V7l5-2z" fill="#1f6fb5" /></IconSvg>
                        我的加载项<ChevGap /><Chevron />
                    </AddIn>
                </AddInList>
            </GroupBody>
            <GroupLabel>加载项</GroupLabel>
        </Group>
        <RibbonGroup w={142} label="链接">
            <Btn w={42} icon="zoom" lines={['缩放定', '位 v']} />
            <Btn w={42} icon="link" lines={['链', '接']} off />
            <Btn w={42} icon="action" lines={['动作']} off />
        </RibbonGroup>
        <RibbonGroup w={58} label="批注"><Btn w={50} icon="comment" lines={['批注']} /></RibbonGroup>
        <RibbonGroup w={313} label="文本" pr={8}>
            <Btn w={45} icon="textbox" lines={['文本框', 'v']} />
            <Btn w={61} icon="header" lines={['页眉和页脚']} />
            <Btn w={46} icon="art" lines={['艺术字', 'v']} />
            <Btn w={58} icon="date" lines={['日期和时间']} />
            <Btn w={52} icon="slideNo" lines={['幻灯片', '编号']} />
            <Btn w={30} icon="object" lines={['对象']} />
        </RibbonGroup>
        <RibbonGroup w={100} label="符号">
            <Btn w={42} icon="pi" lines={['公式', 'v']} />
            <Btn w={42} icon="omega" lines={['符号']} off />
        </RibbonGroup>
        <RibbonGroup w={142} label="媒体">
            <Btn w={42} icon="video" lines={['视频', 'v']} />
            <Btn w={42} icon="audio" lines={['音频', 'v']} />
            <Btn w={42} icon="record" lines={['屏幕', '录制']} />
        </RibbonGroup>
        <Collapse width="11" height="6" viewBox="0 0 11 6"><path d="M.5 5.500l5-5 5 5" fill="none" stroke="#555" /></Collapse>
    </Ribbon>
);

/* design panel pictures */
const g = '#9a9a9a';
const TOOLS = {
    align: [
        { s: 'M2 2v14', f: 'M4 5h11v3H4zM4 10h13v3H4z' }, { s: 'M9 2v14', f: 'M5 4h8v3H5zM3 10h12v3H3z' }, { s: 'M16 2v14', f: 'M7 5h8v3H7zM3 10h12v3H3z' },
        { s: 'M2 2h14', f: 'M4 3h3v8H4zM9 3h3v12H9z' }, { s: 'M2 9h14', f: 'M4 5h4v8H4zM10 3h4v12h-4z' }, { s: 'M2 16h14', f: 'M4 10h3v5H4zM9 4h4v11H9z' },
        { s: 'M2 2v14M16 2v14', f: 'M7 3h4v12H7z' }, { s: 'M2 3h14M2 15h14', f: 'M3 7h12v4H3z' }, { s: 'M2 5V2h4M12 2h4v3M2 13v3h4M12 16h4v-3', f: 'M4 7h10v4H4z', on: true },
    ],
    size: [
        { s: 'M1 3h16v12H1zM4 9h10M6 7L4 9l2 2M12 7l2 2-2 2' }, { s: 'M3 1h12v16H3zM9 4v10M7 6l2-2 2 2M7 12l2 2 2-2' }, { s: 'M1 1h16v16H1zM4 7V4h3M11 4h3v3M4 11v3h3M11 14h3v-3' },
        { s: 'M1 1v16M4 9h10M6 7L4 9l2 2', d: 'M2 2h14v14H2z', w: 2 }, { s: 'M17 1v16M4 9h10M12 7l2 2-2 2', d: 'M1 2h14v14H1z', w: 2 }, { s: 'M1 2h16v14H1zM4 6h10M4 12h10M12 4l2 2-2 2M6 10l-2 2 2 2' },
        { s: 'M1 2h16M9 14V6M7 8l2-2 2 2', d: 'M2 3v13h14V3', w: 2 }, { s: 'M1 16h16M9 4v8M7 10l2 2 2-2', d: 'M2 15V2h14v13', w: 2 },
    ],
    guide: [
        { d: 'M2 1v16', s: 'M13 9H5M7 7L5 9l2 2' }, { d: 'M9 1v16', s: 'M1 9h6M5 7l2 2-2 2M17 9h-6M13 7l-2 2 2 2' }, { d: 'M16 1v16', s: 'M5 9h8M11 7l2 2-2 2' },
        { d: 'M1 2h16', s: 'M9 13V5M7 7l2-2 2 2' }, { d: 'M1 9h16', s: 'M9 1v6M7 5l2 2 2-2M9 17v-6M7 13l2-2 2 2' }, { d: 'M1 16h16', s: 'M9 5v8M7 11l2 2 2-2' },
        { d: 'M1 2h16v14H1z', s: 'M4 9h10M6 7L4 9l2 2M12 7l2 2-2 2' }, { d: 'M2 1h14v16H2z', s: 'M9 4v10M7 6l2-2 2 2M7 12l2 2 2-2' }, { d: 'M1 1h16v16H1z', s: 'M4 7V4h3M11 4h3v3M4 11v3h3M11 14h3v-3' },
    ],
    select: [
        { s: 'M1 1h16v16H1zM3 9h6v6H3zM10 3h5v5h-5z' }, { d: 'M1 1h16v16H1z', s: 'M3 9h6v6H3zM10 3h5v5h-5z', dim: true }, { s: 'M1 5h12v12H1zM4 5V2h12v11h-3M4 11l2 2 4-4', c: '#f25c5c' },
        { s: 'M9 16V7M6 10l3-3 3 3', f: 'M2 2h14v2H2z' }, { s: 'M9 5v4M7 7l2-2 2 2', f: 'M2 9h14v3H2zM2 13h14v3H2z' }, { s: 'M3 3l12 6-5 1-3 6z', c: '#f25c5c' },
        { s: 'M9 2v9M6 8l3 3 3-3', f: 'M2 14h14v2H2z' }, { s: 'M9 8v8M6 13l3 3 3-3', f: 'M2 2h14v3H2zM2 7h14v2H2z' },
    ],
    vector: [
        { f: 'M1 6h11v11H1zM6 1h11v11H6z' }, { f: 'M1 7h10v10H1zM7 2h10v10H7z', b: 'M7 7h4v4H7z' }, { f: 'M1 6h11v11H1zM6 1h11v11H6z', b: 'M7 7h4v4H7z' },
        { f: 'M1 8h9v9H1z', d: 'M6 2h11v10H6z' }, { d: 'M1 7h10v10H1zM7 2h10v10H7z', dim: true }, { s: 'M3 3h12v12H3z', f: 'M1 1h4v4H1zM13 1h4v4h-4zM1 13h4v4H1zM13 13h4v4h-4z' },
        { s: 'M1 2h16v14H1zM6 13l3-8 3 8M7 10h4' }, { s: 'M1 7h11v10H1z', o: 'M7 6a5 5 0 1 1 5 5' },
    ],
    clip: [{ s: 'M3 5h9v13H3zM6 5V1h9v12h-3' }, { s: 'M3 5h9v13H3z', d: 'M6 4V1h10v12h-3', dim: true }],
    snap: [
        { d: 'M2 1v16', s: 'M5 2h9v5H5zM14 12H6M8 10l-2 2 2 2' }, { d: 'M16 1v16', s: 'M4 2h9v5H4zM4 12h8M10 10l2 2-2 2' }, {},
        { d: 'M1 2h16', s: 'M4 14V6M2 8l2-2 2 2M9 7h6v9H9z' }, { d: 'M1 16h16', s: 'M4 3v9M2 10l2 2 2-2M9 3h6v9H9z' },
    ],
    rotate: [
        { s: 'M1 9h12v8H1zM4 6c2-4 8-4 11 2M8 1L5 5l4 1' }, { s: 'M5 9h12v8H5zM14 6C12 2 6 2 3 8M10 1l3 4-4 1' }, {},
        { f: 'M8 1v16H1zM10 1v16h7z' }, { f: 'M1 1l16 7H1zM1 10h16L1 17z' },
    ],
};

const Tool = ({ s, f, d, b, o, w = 1, c = g, dim, on }) => (
    <ToolCell>
        <ToolBg $on={on}>
            <IconSvg width="18" height="18" viewBox="0 0 18 18" style={dim ? { opacity: 0.5 } : undefined}>
                {f && <path d={f} fill={c === g ? '#8e8e8e' : c} />}
                {b && <path d={b} fill="#fff" />}
                {d && <path d={d} fill="none" stroke="#aaa" strokeDasharray="1 1" />}
                {s && <path d={s} fill="none" stroke={c} strokeWidth={w === 2 ? 1 : 1.2} />}
                {o && <path d={o} fill="none" stroke={c} strokeWidth="1.2" />}
            </IconSvg>
        </ToolBg>
    </ToolCell>
);

const ToolSection = ({ h, title, tools, left }) => (
    <Section $h={h} $left={left}>
        <SectionTitle>{title}</SectionTitle>
        <ToolGrid>{tools.map((t, i) => <Tool key={i} {...t} />)}</ToolGrid>
    </Section>
);

const DesignPanel = () => (
    <Panel>
        <PanelTitle>设计工具</PanelTitle>
        <PanelTools>
            <IconSvg width="16" height="16" viewBox="0 0 16 16"><path d="M4 2h8l4 6-4 6H4L0 8z" fill="none" stroke="#333" /><circle cx="8" cy="8" r="2" fill="none" stroke="#333" /></IconSvg>
            <IconSvg width="16" height="16" viewBox="0 0 16 16"><circle cx="8" cy="8" r="7.500" fill="none" stroke="#333" /><text x="8" y="12" textAnchor="middle" fontSize="11" fontFamily="Liberation Sans" fill="#333">?</text></IconSvg>
            <IconSvg width="16" height="16" viewBox="0 0 16 16"><path d="M3 3l10 10M13 3L3 13" stroke="#333" /></IconSvg>
        </PanelTools>
        <PanelGrid>
            <ToolSection h={132} left title="对齐" tools={TOOLS.align} />
            <ToolSection h={132} title="大小" tools={TOOLS.size} />
            <ToolSection h={132} left title="参考线布局" tools={TOOLS.guide} />
            <ToolSection h={132} title="选择" tools={TOOLS.select} />
            <ToolSection h={132} left title="矢量" tools={TOOLS.vector} />
            <ToolSection h={132} title="剪贴板" tools={TOOLS.clip} />
            <ToolSection h={103} left title="吸附" tools={TOOLS.snap} />
            <ToolSection h={103} title="旋转" tools={TOOLS.rotate} />
            <Section $h={96} $wide>
                <SectionTitle>文本框</SectionTitle>
                <Options>
                    <Option><Radio $on />自由调整</Option>
                    <Option><Radio />根据文字</Option>
                    <Option><Radio />溢出缩排</Option>
                    <Option>
                        <Check><IconSvg width="10" height="8" viewBox="0 0 10 8"><path d="M1 4l3 3 5-6" fill="none" stroke="#fff" /></IconSvg></Check>
                        自动换行
                    </Option>
                </Options>
            </Section>
            <Section $h={132} $wide>
                <SectionTitle>
                    文本框边距
                    <IconSvg width="42" height="16" viewBox="0 0 42 16">
                        <path d="M2 4h12M5 4V2h6v2M3 4v11h10V4M6 7v5M8 7v5M10 7v5" fill="none" stroke="#aaa" />
                        <path d="M40 8a6 6 0 1 1-2-4.500M38 1v3h-3" fill="none" stroke="#aaa" />
                    </IconSvg>
                </SectionTitle>
                <MarginRow $mt={10}>
                    <MarginIcon><IconSvg width="16" height="16" viewBox="0 0 16 16"><path d="M1 1v14M14 8H4M7 5L4 8l3 3" fill="none" stroke="#ccc" /></IconSvg></MarginIcon>
                    <SpinInput $w={89}><Spin /><Spin $down /></SpinInput>
                    <MarginIcon><IconSvg width="16" height="16" viewBox="0 0 16 16"><path d="M15 1v14M2 8h10M9 5l3 3-3 3" fill="none" stroke="#ccc" /></IconSvg></MarginIcon>
                    <SpinInput $w={90}><Spin /><Spin $down /></SpinInput>
                </MarginRow>
                <MarginRow $mt={8}>
                    <MarginIcon><IconSvg width="16" height="16" viewBox="0 0 16 16"><path d="M1 1h14M8 14V4M5 7l3-3 3 3" fill="none" stroke="#ccc" /></IconSvg></MarginIcon>
                    <SpinInput $w={89} />
                    <MarginIcon><IconSvg width="16" height="16" viewBox="0 0 16 16"><path d="M1 15h14M8 2v10M5 9l3 3 3-3" fill="none" stroke="#ccc" /></IconSvg></MarginIcon>
                    <SpinInput $w={90}><Spin /><Spin $down /></SpinInput>
                </MarginRow>
            </Section>
        </PanelGrid>
        <ScrollThumb />
    </Panel>
);

const Status = () => (
    <StatusBar>
        <StatusItem $ls={0.3}>幻灯片 第 1 张，共 1 张</StatusItem>
        <StatusItem $ml={19}>
            <IconSvg width="14" height="14" viewBox="0 0 14 14"><path d="M6 2H1v10h5l1 1V3zM7 3l1-1h5v3M7 13l1-1h5V8M9 7l1.500 1.500L13 5" fill="none" stroke="#777" /></IconSvg>
        </StatusItem>
        <StatusItem $ml={18}>中文(中国)</StatusItem>
        <StatusItem $ml={17}>
            <IconSvg width="16" height="14" viewBox="0 0 16 14"><path d="M4 1a6 6 0 0 0 0 10M7 0v3M10 2l-2 1M6 13a5 5 0 0 0 3 0M9 9l2 3 4-5" fill="none" stroke="#555" /></IconSvg>
            辅助功能: 一切就绪
        </StatusItem>
        <StatusRight>
            <StatusItem>
                <IconSvg width="14" height="12" viewBox="0 0 14 12"><path d="M7 0L4 3h6zM1 5h12M1 8h12M1 11h12" fill="none" stroke="#555" /></IconSvg>
                备注
            </StatusItem>
            <StatusItem $ml={20}>
                <IconSvg width="14" height="13" viewBox="0 0 14 13"><path d="M1 0h12a1 1 0 0 1 1 1v7a1 1 0 0 1-1 1H6l-3 4V9H1a1 1 0 0 1-1-1V1a1 1 0 0 1 1-1z" fill="#555" /></IconSvg>
                批注
            </StatusItem>
            <StatusItem $ml={19} $gap={0} $full>
                <ViewBtn $on><IconSvg width="15" height="13" viewBox="0 0 15 13"><path d="M1 1h13v11H1zM4 1v11M7 3h5v4H7zM7 9h5" fill="none" stroke="#666" /></IconSvg></ViewBtn>
                <ViewBtn><IconSvg width="15" height="13" viewBox="0 0 15 13"><path d="M1 1h5v4H1zM9 1h5v4H9zM1 8h5v4H1zM9 8h5v4H9z" fill="none" stroke="#666" /></IconSvg></ViewBtn>
                <ViewBtn><IconSvg width="15" height="13" viewBox="0 0 15 13"><path d="M1 1h5l2 1 1-1h5v10H9l-1 1-2-1H1zM3 3h3M3 5h3M3 7h3M10 3h3M10 5h3M10 7h3" fill="none" stroke="#666" /></IconSvg></ViewBtn>
                <ViewBtn><IconSvg width="15" height="13" viewBox="0 0 15 13"><path d="M1 1h13M3 1v6h9V1M7.500 7v4M4 12h7" fill="none" stroke="#666" /></IconSvg></ViewBtn>
            </StatusItem>
            <StatusItem $ml={5} $gap={0}>
                <IconSvg width="10" height="10" viewBox="0 0 10 10"><path d="M1 5h8" stroke="#444" /></IconSvg>
                <ZoomTrack><ZoomKnob /></ZoomTrack>
                <IconSvg width="10" height="10" viewBox="0 0 10 10"><path d="M1 5h8M5 1v8" stroke="#444" /></IconSvg>
            </StatusItem>
            <StatusItem $ml={14}>104%</StatusItem>
            <StatusItem $ml={12}>
                <IconSvg width="14" height="14" viewBox="0 0 14 14"><path d="M1 1h12v12H1zM3 5V3h2M9 3h2v2M3 9v2h2M11 9v2H9" fill="none" stroke="#666" /></IconSvg>
            </StatusItem>
        </StatusRight>
    </StatusBar>
);

const TITLE_TABS = [
    ['文件', 60], ['开始', 50], ['iSlide', 60], ['插入', 49], ['绘图', 51], ['设计', 51], ['切换', 51], ['动画', 51],
    ['幻灯片放映', 88], ['录制', 51], ['审阅', 51], ['视图', 49], ['帮助', 51], ['百度网盘', 77],
];

const Bars = [[1463, 16], [1469, 23], [1476, 17], [1483, 32], [1491, 20]];
const Thin = [[1572, 36], [1577, 34], [1583, 32], [1588, 30], [1594, 27], [1599, 23], [1604, 20], [1609, 15]];

const TitleDecor = () => (
    <Decor width="1920" height="64" viewBox="0 0 1920 64" fill="#9b412a">
        {Bars.map(([x, h]) => <rect key={x} x={x} y="0" width="4" height={h} />)}
        <path d="M1510 0h5l5 12-2 3zM1528 0h14v33l-14-7zM1551 0h14v37h-14z" />
        {Thin.map(([x, h]) => <rect key={x} x={x} y="0" width="2.500" height={h} />)}
        <circle cx="1632" cy="0" r="13" />
        <circle cx="1683" cy="21" r="20" fill="none" stroke="#9b412a" strokeWidth="6" />
        <circle cx="1683" cy="21" r="5" />
        <path d="M1719 0a54 54 0 0 0 108 0h-7a47 47 0 0 1-94 0z" />
        <path d="M1735 0l44 46h-8l-42-46zM1747 0l46 46h-7l-45-46zM1761 0l36 36-4 4-40-40zM1775 0l30 30-4 4-34-34zM1845 0l-12 13 5 4 16-17zM1862 0l-28 28 5 5 33-33zM1880 0l-40 42 4 4 44-46z" />
    </Decor>
);

const Annotations = () => (
    <Overlay width="1920" height="1033" viewBox="0 0 1920 1033">
        <rect x="282" y="62" width="51" height="76" rx="24" fill="none" stroke="#ed1c24" strokeWidth="11" />
        <rect x="301" y="556" width="37" height="39" rx="14" fill="none" stroke="#ed1c24" strokeWidth="11" />
        <path d="M347 596l36 7-8 8 68 64-8 9-68-65-9 11z" fill="#ff0000" />
    </Overlay>
);

const BaiduMark = () => (
    <Watermark>
        <MarkRow>
            <MarkText $size={82} $lh={64} $weight={700} $ls={-4}>Bai</MarkText>
            <IconSvg width="104" height="104" viewBox="0 0 104 104">
                <g fill="rgba(255,255,255,.6)" stroke="rgba(150,150,150,.3)" strokeWidth="1.500">
                    <ellipse cx="16" cy="34" rx="13" ry="18" />
                    <ellipse cx="40" cy="9" rx="12" ry="15" />
                    <ellipse cx="71" cy="12" rx="12" ry="15" />
                    <ellipse cx="93" cy="39" rx="10" ry="14" />
                    <path d="M46 37c-10 0-14 12-24 22-9 9-14 18-8 31 5 11 18 12 30 9 8-2 16-2 24 0 12 3 24 2 29-9 6-13-1-22-10-31-10-10-14-22-24-22-6-1-11-1-17 0z" />
                </g>
                <text x="52" y="91" textAnchor="middle" fontFamily="Liberation Sans" fontWeight="700" fontSize="46" fill="rgba(165,165,165,.4)">du</text>
            </IconSvg>
            <MarkText $cjk $size={57} $lh={64} $weight={700} $ml={4}>经验</MarkText>
        </MarkRow>
        <MarkText $size={47} $lh={56} $ls={-0.2}>jingyan.baidu.com</MarkText>
    </Watermark>
);

export default function App() {
    return (
        <Page>
            <GlobalStyle />
            <TitleBar>
                <TitleDecor />
                <TopRow>
                    <Qat>
                        <QatBtn $ml={17} $w={24}>
                            <IconSvg width="15" height="15" viewBox="0 0 15 15"><path d="M1 1h11l2 2v11H1zM4 1v4h7V1M4 14V9h7v5" fill="none" stroke="#fff" strokeWidth="1.500" /></IconSvg>
                        </QatBtn>
                        <QatBtn $ml={7} $w={20}>
                            <IconSvg width="16" height="15" viewBox="0 0 16 15"><path d="M6 1L2 5l4 4M2 5h8a4 4 0 0 1 0 8H6" fill="none" stroke="#fff" strokeWidth="1.500" /></IconSvg>
                        </QatBtn>
                        <QatBtn $ml={3} $w={8}><IconSvg width="6" height="4" viewBox="0 0 6 4"><path d="M0 0l3 3 3-3" fill="none" stroke="#fff" /></IconSvg></QatBtn>
                        <QatBtn $ml={8} $w={20} $dim>
                            <IconSvg width="15" height="15" viewBox="0 0 15 15"><path d="M4 1a6 6 0 1 0 7 0M11 5V1H7" fill="none" stroke="#fff" strokeWidth="1.500" /></IconSvg>
                        </QatBtn>
                        <QatBtn $ml={9} $w={20}>
                            <IconSvg width="16" height="18" viewBox="0 0 16 18"><path d="M1 1h14M3 1v10h10V1M8 11v4M5 16h6" fill="none" stroke="#fff" /><path d="M7 4v5l4-2.500z" fill="#fff" /></IconSvg>
                        </QatBtn>
                        <QatBtn $ml={8} $w={20} $dim>
                            <IconSvg width="16" height="16" viewBox="0 0 16 16"><circle cx="8" cy="8" r="7" fill="none" stroke="#fff" strokeDasharray="2 1" /><path d="M5 11l6-6" stroke="#fff" /></IconSvg>
                        </QatBtn>
                        <QatBtn $ml={15} $w={10}>
                            <IconSvg width="7" height="7" viewBox="0 0 7 7"><path d="M1 1h5" stroke="#fff" /><path d="M0 3.500h7L3.500 7z" fill="#fff" /></IconSvg>
                        </QatBtn>
                    </Qat>
                    <DocTitle>演示文稿1  -  PowerPoint</DocTitle>
                    <WinControls>
                        <UserName>刘 玲</UserName>
                        <Avatar>
                            <IconSvg width="16" height="16" viewBox="0 0 16 16"><circle cx="8" cy="5" r="4" fill="none" stroke="#666" /><path d="M1 16c0-5 3-7 7-7s7 2 7 7" fill="none" stroke="#666" /></IconSvg>
                        </Avatar>
                        <WinBtn><IconSvg width="14" height="11" viewBox="0 0 14 11"><path d="M.5.5h13v10H.500zM.5 3h13M7 9V5M5 6.500L7 4.500l2 2" fill="none" stroke="#fff" /></IconSvg></WinBtn>
                        <WinBtn><IconSvg width="10" height="10" viewBox="0 0 10 10"><path d="M0 5h10" stroke="#fff" /></IconSvg></WinBtn>
                        <WinBtn><IconSvg width="10" height="10" viewBox="0 0 10 10"><path d="M.5 2.500h7v7h-7zM2.500 2.500v-2h7v7h-2" fill="none" stroke="#fff" /></IconSvg></WinBtn>
                        <WinBtn><IconSvg width="10" height="10" viewBox="0 0 10 10"><path d="M0 0l10 10M10 0L0 10" stroke="#fff" /></IconSvg></WinBtn>
                    </WinControls>
                </TopRow>
                <TabRow>
                    {TITLE_TABS.map(([label, w]) => <Tab key={label} $w={w} $active={label === '插入'}>{label}</Tab>)}
                    <TellMe>
                        <IconSvg width="14" height="18" viewBox="0 0 14 18"><path d="M4 13c0-3-3-4-3-7a6 6 0 0 1 12 0c0 3-3 4-3 7zM4.500 15h5M5.500 17h3" fill="none" stroke="#fff" /></IconSvg>
                        操作说明搜索
                    </TellMe>
                    <Share>
                        <IconSvg width="14" height="16" viewBox="0 0 14 16"><circle cx="6" cy="5" r="4" fill="none" stroke="#fff" /><path d="M0 15c0-3 2-5 5-6M10 11v5M7.500 13.500h5" fill="none" stroke="#fff" /></IconSvg>
                        共享
                    </Share>
                </TabRow>
            </TitleBar>
            <RibbonBar />
            <Body>
                <ThumbPane>
                    <ThumbNo>1</ThumbNo>
                    <Thumb />
                </ThumbPane>
                <Stage>
                    <SlideCanvas />
                </Stage>
                <DesignPanel />
            </Body>
            <Status />
            <ShapeGallery />
            <Annotations />
            <BaiduMark />
        </Page>
    );
}
